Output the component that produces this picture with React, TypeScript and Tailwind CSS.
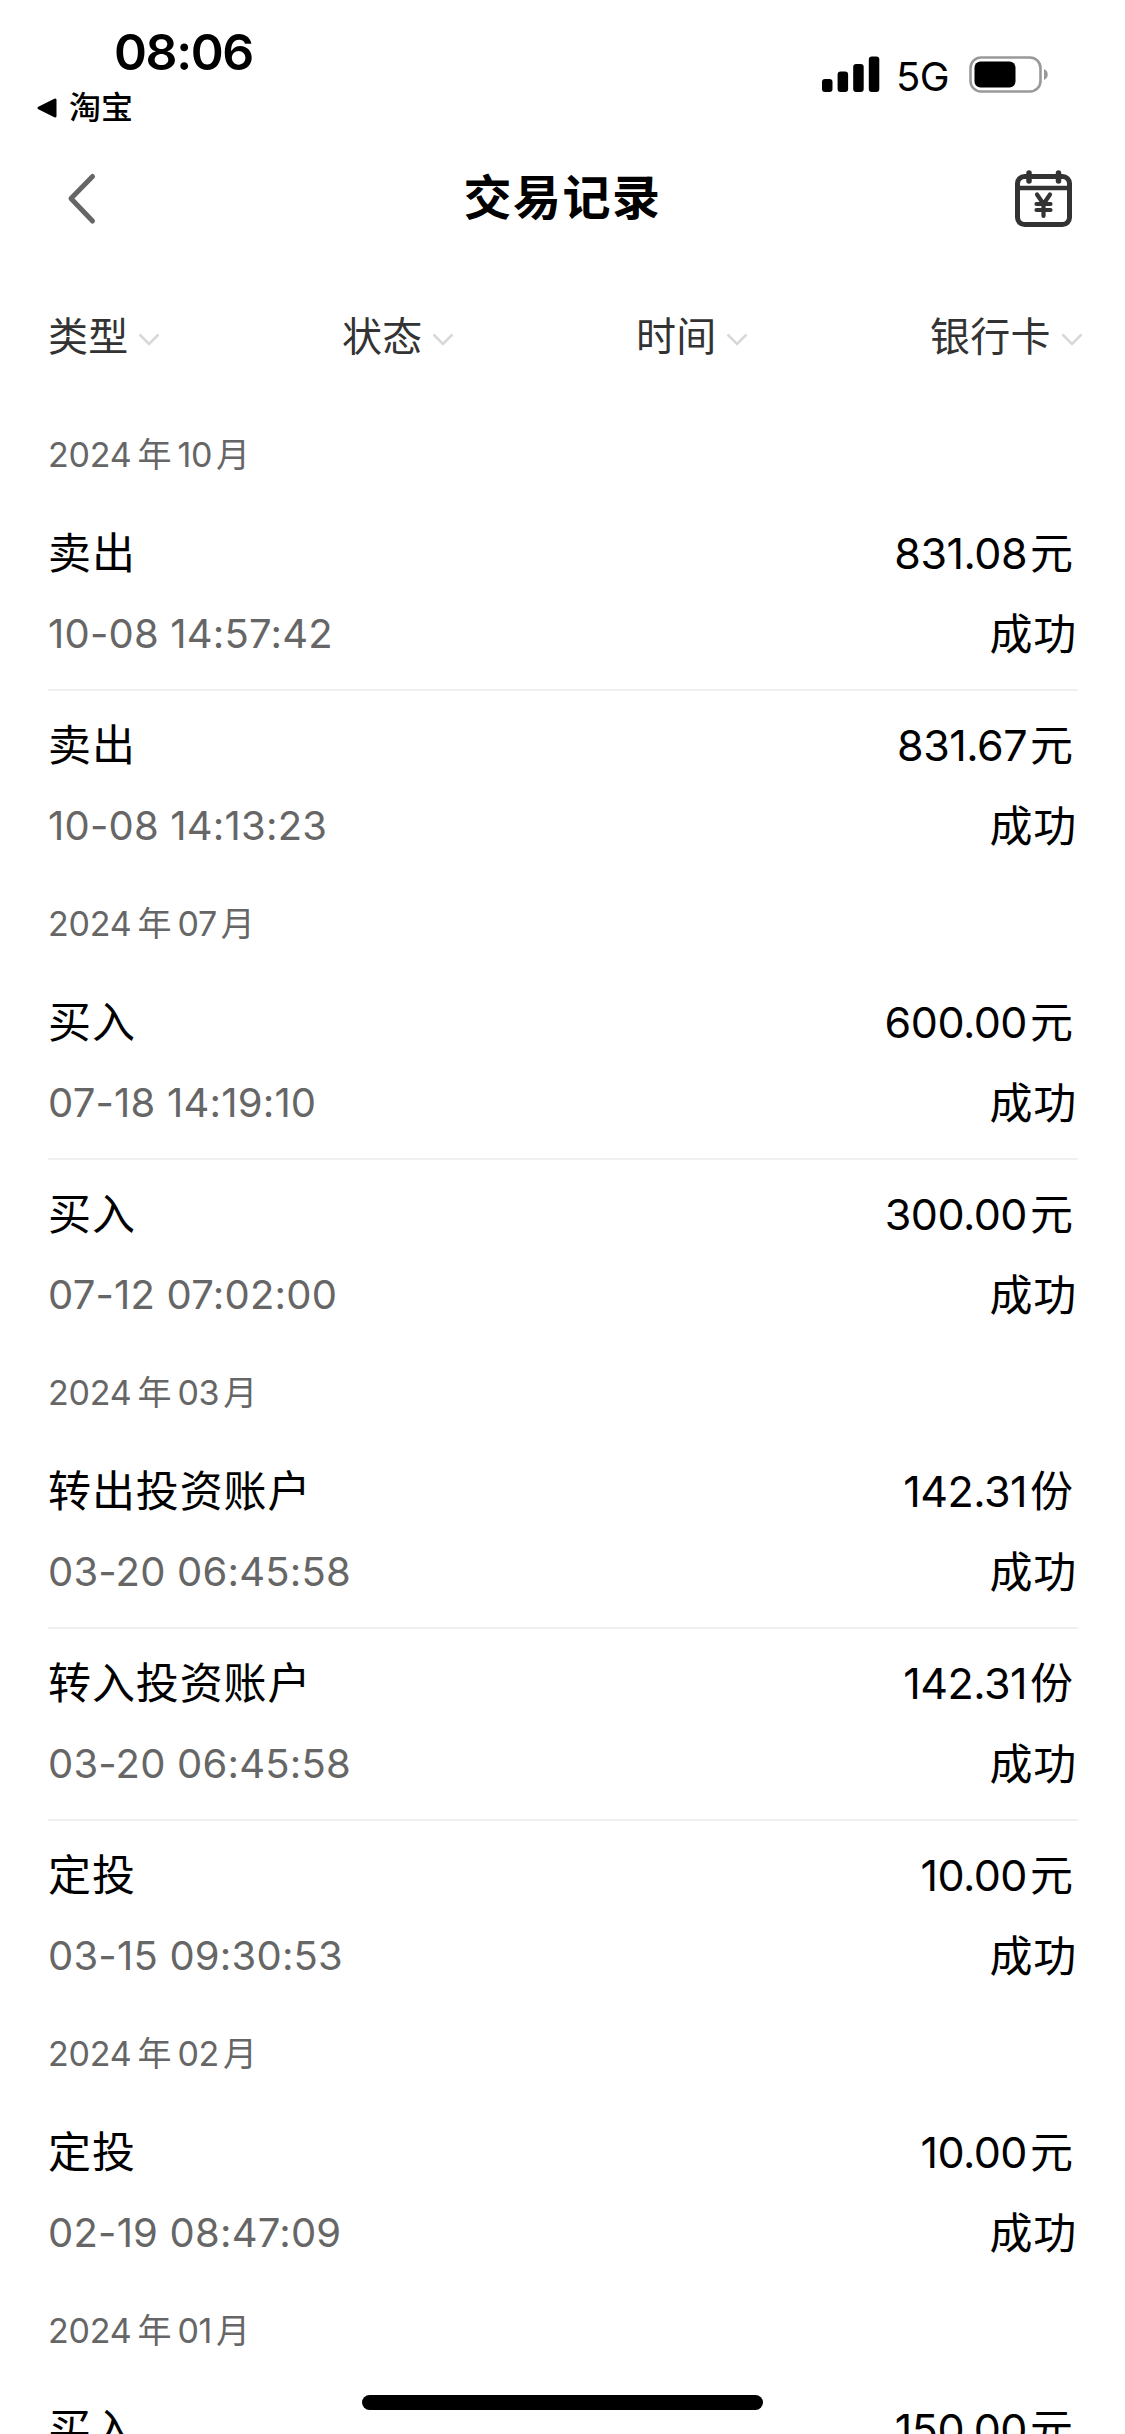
type RecordItem = {
  title: string;
  date: string;
  amount: string;
  unit: string;
  status: string;
};

type MonthGroup = {
  year: string;
  month: string;
  items: RecordItem[];
};

const filters = ["类型", "状态", "时间", "银行卡"];

const groups: MonthGroup[] = [
  {
    year: "2024",
    month: "10",
    items: [
      { title: "卖出", date: "10-08 14:57:42", amount: "831.08", unit: "元", status: "成功" },
      { title: "卖出", date: "10-08 14:13:23", amount: "831.67", unit: "元", status: "成功" },
    ],
  },
  {
    year: "2024",
    month: "07",
    items: [
      { title: "买入", date: "07-18 14:19:10", amount: "600.00", unit: "元", status: "成功" },
      { title: "买入", date: "07-12 07:02:00", amount: "300.00", unit: "元", status: "成功" },
    ],
  },
  {
    year: "2024",
    month: "03",
    items: [
      { title: "转出投资账户", date: "03-20 06:45:58", amount: "142.31", unit: "份", status: "成功" },
      { title: "转入投资账户", date: "03-20 06:45:58", amount: "142.31", unit: "份", status: "成功" },
      { title: "定投", date: "03-15 09:30:53", amount: "10.00", unit: "元", status: "成功" },
    ],
  },
  {
    year: "2024",
    month: "02",
    items: [
      { title: "定投", date: "02-19 08:47:09", amount: "10.00", unit: "元", status: "成功" },
    ],
  },
  {
    year: "2024",
    month: "01",
    items: [
      { title: "买入", date: "", amount: "150.00", unit: "元", status: "" },
    ],
  },
];

function StatusBar() {
  return (
    <div className="flex h-[132px] shrink-0 justify-between text-black">
      <div className="pl-9 pt-[22px]">
        <div className="pl-[78px] text-[50px] leading-[60px] font-semibold tracking-[-1.4px]">08:06</div>
        <div className="flex items-center pt-[5px]">
          <svg width="22" height="22" viewBox="0 0 22 22">
            <path d="M3 11 19 3v16z" fill="#000" stroke="#000" strokeWidth="3" strokeLinejoin="round" />
          </svg>
          <span className="ml-[11px] text-[32px] leading-[42px] font-medium">淘宝</span>
        </div>
      </div>
      <div className="flex h-[38px] items-center pr-[76px] mt-[56px]">
        <svg width="58" height="38" viewBox="0 0 58 38">
          <rect x="0" y="23" width="10.5" height="13" rx="3" />
          <rect x="15.6" y="15.5" width="10.5" height="20.5" rx="3" />
          <rect x="31.2" y="8" width="10.5" height="28" rx="3" />
          <rect x="46.8" y="0.5" width="10.5" height="35.5" rx="3" />
        </svg>
        <span className="ml-[16px] mt-1 w-[55px] text-[40px] leading-[38px] tracking-[-0.5px]">5G</span>
        <svg className="ml-[17px]" width="81" height="38" viewBox="0 0 81 38">
          <rect x="2.5" y="1.5" width="70" height="34" rx="10.5" fill="none" stroke="#999" strokeWidth="2.6" />
          <rect x="6.5" y="5.5" width="41" height="26" rx="6" />
          <path d="M76 13c5 2 5 9 0 11z" fill="#999" />
        </svg>
      </div>
    </div>
  );
}

function CalendarYuan() {
  return (
    <svg width="60" height="60" viewBox="0 0 60 60" fill="none" stroke="#333" strokeWidth="5" strokeLinecap="round">
      <rect x="4.5" y="8.5" width="52" height="48" rx="7" />
      <path d="M5 20h51" strokeWidth="4.5" />
      <path d="M16 5v8M45.500 5v8" strokeWidth="5.500" />
      <path d="m24 26.500 6.500 9.500 6.500-9.500M30.500 36V48M23.500 36h14M23.500 42h14" strokeWidth="4.200" />
    </svg>
  );
}

function NavBar() {
  return (
    <div className="flex h-[132px] shrink-0 items-center justify-between pl-[65px] pr-[52px]">
      <svg width="32" height="54" viewBox="0 0 32 54" fill="none" stroke="#666" strokeWidth="5" strokeLinecap="round" strokeLinejoin="round">
        <path d="M27.500 5.500 6 27.500 27.500 50" />
      </svg>
      <h1 className="ml-[15px] text-[48px] leading-[60px] font-bold tracking-[1.5px] text-black">交易记录</h1>
      <CalendarYuan />
    </div>
  );
}

function FilterBar() {
  return (
    <div className="grid h-[150px] shrink-0 grid-cols-[294px_294px_294px_1fr] items-center pl-12 pb-1 text-[#333]">
      {filters.map((name) => (
        <div key={name} className="flex items-center">
          <span className="text-[40px] leading-[60px] tracking-[0.2px]">{name}</span>
          <svg className="ml-[10px] mt-[5px]" width="22" height="14" viewBox="0 0 22 14" fill="none" stroke="#d8d8d8" strokeWidth="2.500">
            <path d="m1.500 1.500 9.500 9.500 9.500-9.500" />
          </svg>
        </div>
      ))}
    </div>
  );
}

function Row({ item, divider }: { item: RecordItem; divider: boolean }) {
  return (
    <div className={divider ? "h-[192px] border-b-2 border-[#f0f0f0] pt-[24px]" : "h-[192px] pt-[24px]"}>
      <div className="flex justify-between text-black">
        <span className="text-[43px] leading-[60px] tracking-[0.9px]">{item.title}</span>
        <span className="pr-[5px] text-[43px] leading-[60px] tracking-[-0.5px]">
          {item.amount}
          <span className="ml-[3px] tracking-normal">{item.unit}</span>
        </span>
      </div>
      <div className="mt-[21px] flex justify-between">
        <span className="text-[40px] leading-[60px] tracking-[0.2px] text-[#666]">{item.date}</span>
        <span className="pr-px text-[43px] leading-[60px] tracking-[0.8px] text-black">{item.status}</span>
      </div>
    </div>
  );
}

export default function App() {
  return (
    <div className="relative flex h-[2434px] w-[1125px] flex-col overflow-hidden bg-white font-['Inter','Noto_Sans_CJK_SC',sans-serif]">
      <StatusBar />
      <NavBar />
      <FilterBar />
      <div className="pl-12 pr-[47px]">
        {groups.map((group) => (
          <section key={group.year + group.month}>
            <h2 className="h-[85px] pt-[11px] text-[34px] leading-[60px] font-normal text-[#666]">
              <span className="tracking-[-0.2px]">{group.year}</span>
              <span className="mx-[6px]">年</span>
              <span className="tracking-[-0.4px]">{group.month}</span>
              <span className="ml-[4px]">月</span>
            </h2>
            {group.items.map((item, i) => (
              <Row key={i} item={item} divider={i < group.items.length - 1} />
            ))}
          </section>
        ))}
      </div>
      <div className="absolute bottom-6 left-[362px] h-[15px] w-[401px] rounded-full bg-black" />
    </div>
  );
}
